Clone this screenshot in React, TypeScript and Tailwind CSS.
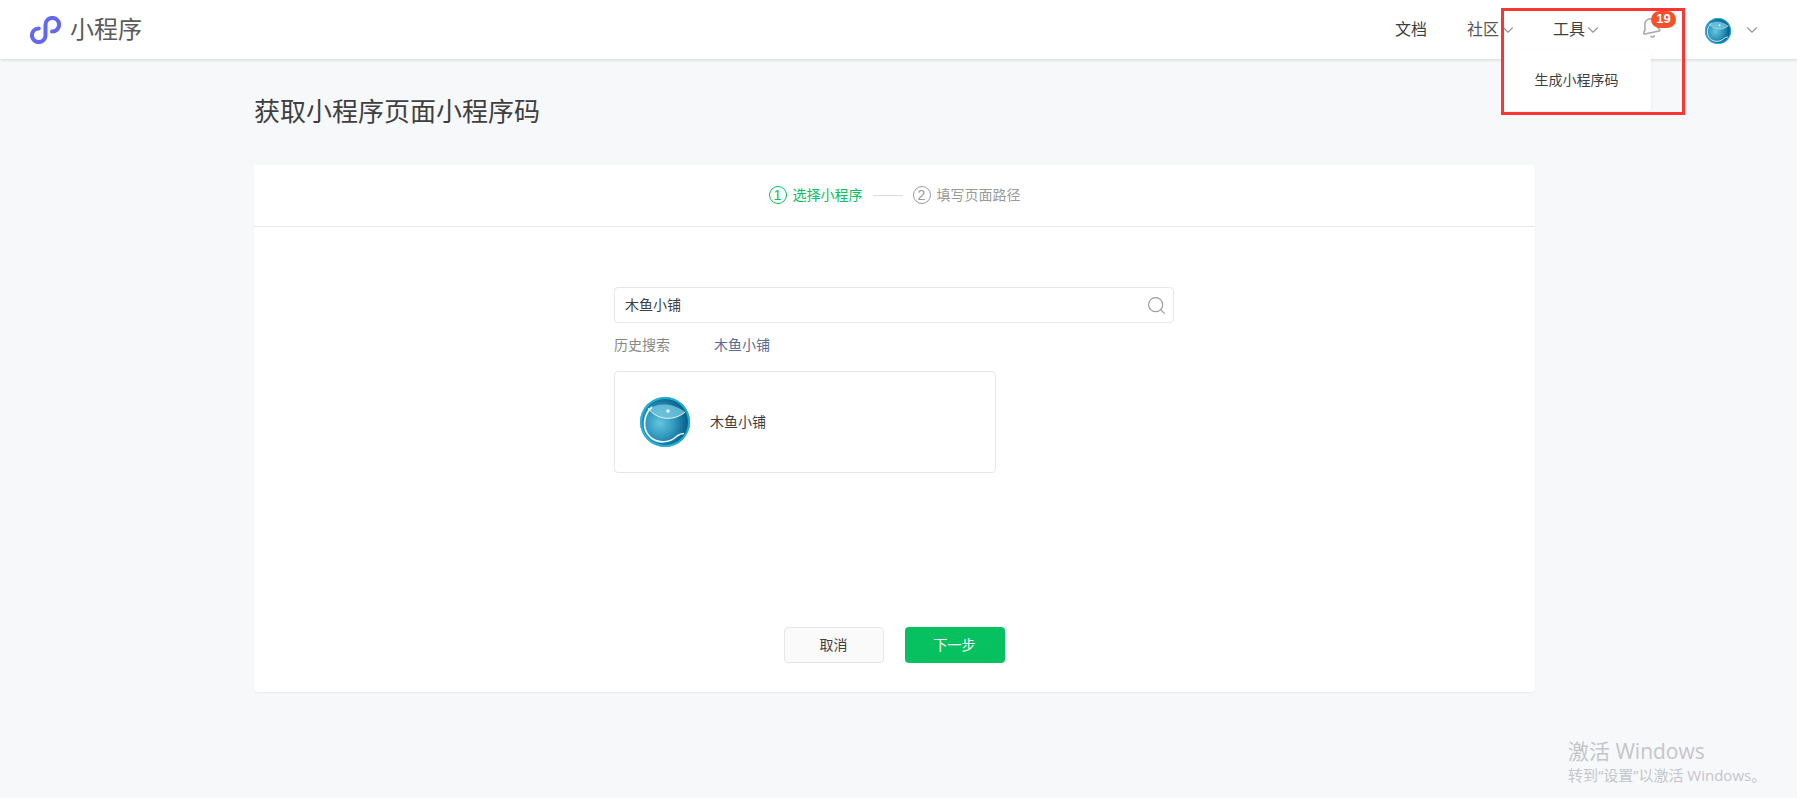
import React from "react";
import { Bell, ChevronDown, Search } from "lucide-react";

const FishIcon = ({ id, size }: { id: string; size: string }) => (
  <svg viewBox="0 0 50 50" className={size}>
    <defs>
      <radialGradient id={id} cx="40%" cy="52%" r="60%">
        <stop offset="0%" stopColor="#62c6de" />
        <stop offset="50%" stopColor="#2f95bc" />
        <stop offset="85%" stopColor="#0c6690" />
        <stop offset="100%" stopColor="#0a5f88" />
      </radialGradient>
    </defs>
    <circle cx="25" cy="25" r="25" fill={`url(#${id})`} />
    <circle cx="25" cy="25" r="24" fill="none" stroke="#25c6ea" strokeWidth="2" opacity="0.75" />
    <path d="M9 12 C18 5 34 6 45 15 C36 23 19 24 9 12Z" fill="#74c6de" opacity="0.8" />
    <path d="M8 11 C17 24 35 24 45 15" fill="none" stroke="#e6f7fb" strokeWidth="1" />
    <path d="M12 10 C3 18 2 32 10 40 C18 47 30 46 37 39 C39 37.5 41 36.5 44 36.5" fill="none" stroke="#e6f7fb" strokeWidth="1.7" />
    <circle cx="28" cy="14" r="1.8" fill="#e6f7fb" />
  </svg>
);

const App = () => {
  return (
    <div className="relative h-[798px] overflow-hidden bg-[#f7f8fa] font-['Liberation_Sans','Noto_Sans_CJK_SC',sans-serif] text-[#3f3f3f]">
      <header className="relative flex h-[59px] items-center justify-between bg-white pl-[30px] pr-[36px] shadow-[0_1px_3px_rgba(0,0,0,0.14)]">
        <div className="flex items-center gap-[9px]">
          <svg viewBox="30 14 31 28" className="h-7 w-[31px]">
            <path
              d="M38.8 26.5 A6.8 6.8 0 1 0 45.5 33.2 V22.8 A6.8 6.8 0 1 1 52 29.5"
              fill="none"
              stroke="#6467f0"
              strokeWidth="4"
              strokeLinecap="round"
            />
          </svg>
          <span className="text-2xl text-[#5a5a5a]">小程序</span>
        </div>
        <nav className="flex items-center text-base">
          <span>文档</span>
          <span className="ml-10 flex items-center text-[#555]">
            社区
            <ChevronDown className="size-[18px] text-[#999]" strokeWidth={1.5} />
          </span>
          <span className="ml-9 flex items-center">
            工具
            <ChevronDown className="-ml-px size-[18px] text-[#999]" strokeWidth={1.5} />
          </span>
          <span className="relative ml-[38px] flex -translate-y-[2px]">
            <Bell className="size-[22px] -rotate-12 text-[#aaa]" strokeWidth={1.8} />
            <span className="absolute -top-[6px] left-[11px] flex h-[17px] w-[25px] items-center justify-center rounded-full bg-[#fa5028] text-[13px] font-bold text-white">
              19
            </span>
          </span>
          <span className="ml-[43px] flex translate-y-px">
            <FishIcon id="fish-small" size="size-[26px]" />
          </span>
          <ChevronDown className="ml-3 size-[18px] text-[#999]" strokeWidth={1.5} />
        </nav>
      </header>

      {/* dropdown + annotation box */}
      <div className="absolute left-[1504px] top-[50px] flex h-[61px] w-[147px] items-center justify-center rounded bg-white pr-[2px] text-[14px] text-[#3f3f3f] shadow-[0_1px_4px_rgba(0,0,0,0.06)]">
        生成小程序码
      </div>
      <div className="absolute left-[1501px] top-[8px] h-[107px] w-[184px] border-[3px] border-[#fb3434]" />

      <main className="ml-[254px] w-[1281px] pt-[34px]">
        <h1 className="text-[26px] leading-[39px] text-[#3f3f3f]">获取小程序页面小程序码</h1>
        <div className="mt-[33px] h-[527px] rounded-sm bg-white shadow-[0_1px_2px_rgba(0,0,0,0.06)]">
          <div className="flex h-[62px] items-center justify-center border-b border-[#e7e7eb] pb-[1px] text-sm">
            <span className="flex size-[18px] items-center justify-center rounded-full border border-[#07c160] text-[14px] text-[#07c160]">
              1
            </span>
            <span className="ml-[6px] text-[#07c160]">选择小程序</span>
            <span className="mx-[10px] h-px w-[30px] bg-[#d9dadc]" />
            <span className="flex size-[18px] items-center justify-center rounded-full border border-[#9a9a9a] text-[14px] text-[#9a9a9a]">
              2
            </span>
            <span className="ml-[6px] text-[#9a9a9a]">填写页面路径</span>
          </div>

          <div className="ml-[360px] pt-[60px]">
            <div className="flex h-9 w-[560px] items-center justify-between rounded-sm border border-[#e7e7eb] pl-[10px] pr-[6px] text-sm text-[#3f3f3f]">
              木鱼小铺
              <Search className="size-[21px] text-[#9a9a9a]" strokeWidth={1.3} />
            </div>
            <div className="mt-[11px] flex h-[21px] items-center text-sm">
              <span className="w-[100px] text-[#888]">历史搜索</span>
              <span className="text-[#576b95]">木鱼小铺</span>
            </div>
            <div className="mt-[16px] flex h-[102px] w-[382px] items-center rounded-sm border border-[#e7e7eb] pl-[25px] text-sm">
              <FishIcon id="fish-large" size="size-[50px]" />
              <span className="ml-5">木鱼小铺</span>
            </div>
          </div>

          <div className="mt-[154px] flex justify-center gap-[21px] pr-[1px] text-sm">
            <button className="h-9 w-[100px] rounded-sm border border-[#e7e7eb] bg-[#fafafa] text-[#3f3f3f]">取消</button>
            <button className="h-9 w-[100px] rounded-sm bg-[#07c160] text-white">下一步</button>
          </div>
        </div>
      </main>

      {/* system watermark */}
      <div className="absolute left-[1568px] top-[738px] font-['Open_Sans','Noto_Sans_CJK_SC',sans-serif] text-[#c4c6ca]">
        <div className="text-[21px] leading-[26px]">激活 Windows</div>
        <div className="text-[15px] leading-[22px]">转到“设置”以激活 Windows。</div>
      </div>
    </div>
  );
};

export default App;
